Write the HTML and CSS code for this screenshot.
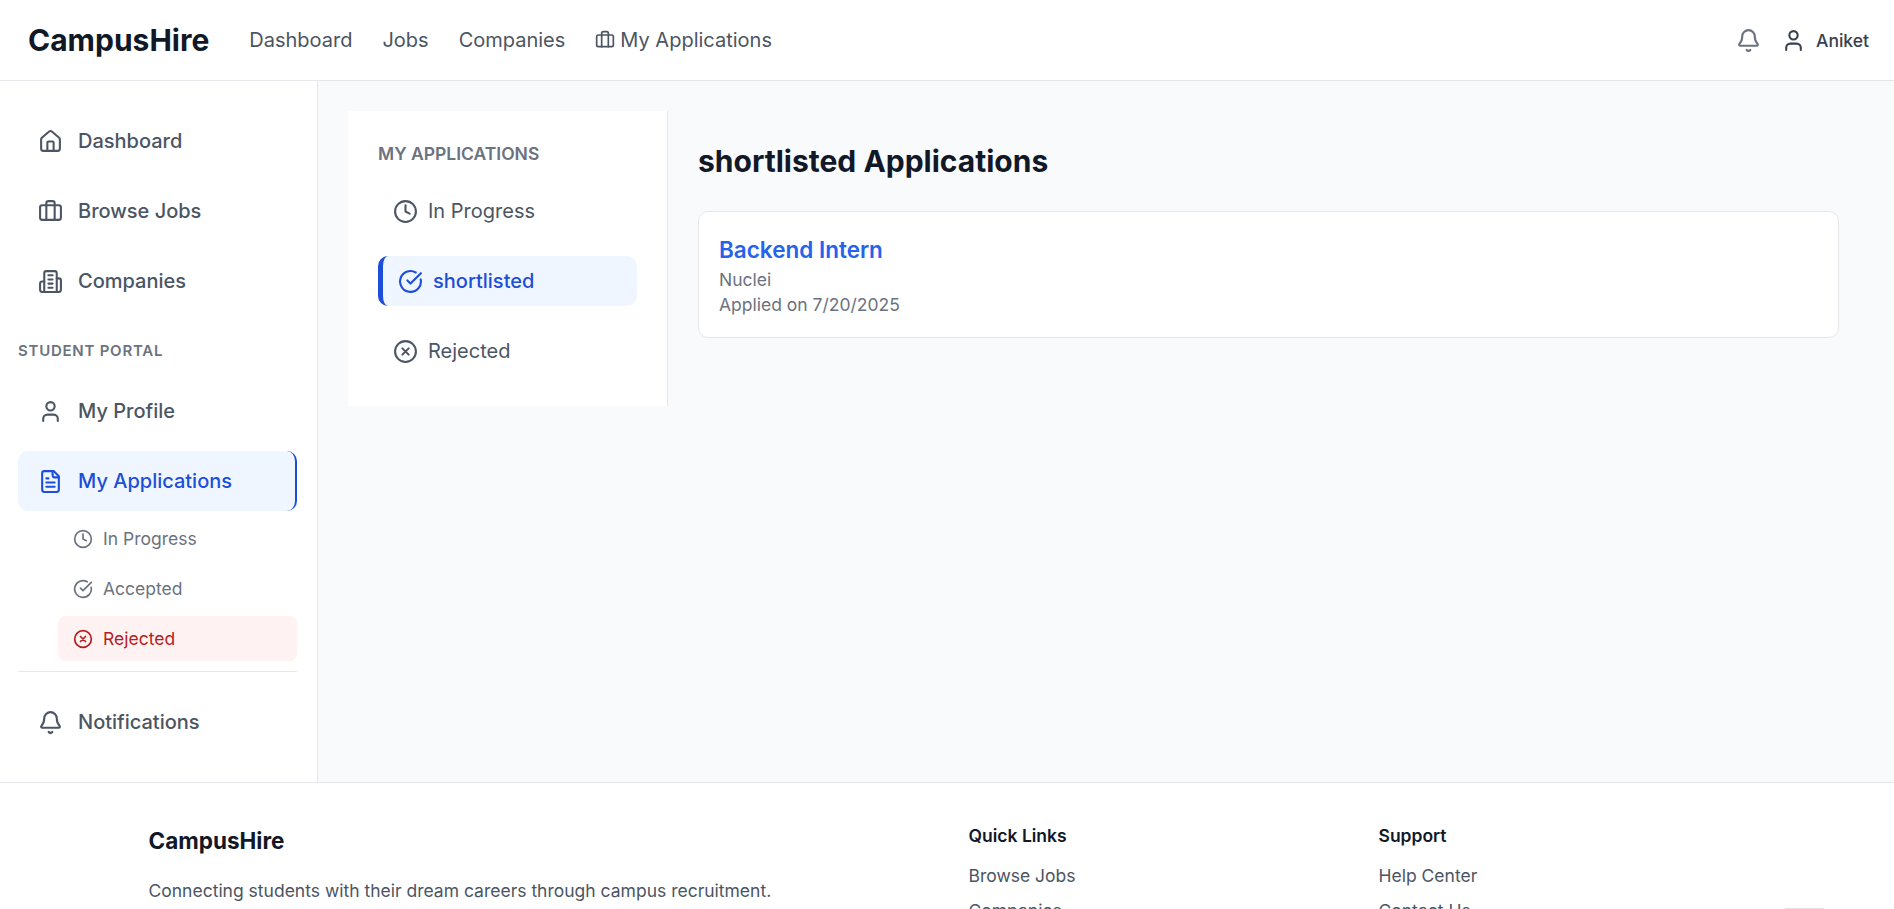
FILE: index.html
```html
<!DOCTYPE html>
<html lang="en">
<head>
<meta charset="utf-8">
<title>CampusHire</title>
<link rel="stylesheet" href="styles.css">
</head>
<body>
<svg class="sprite" aria-hidden="true">
  <symbol id="briefcase" viewBox="0 0 24 24"><path d="M16 20V4a2 2 0 0 0-2-2h-4a2 2 0 0 0-2 2v16"/><rect width="20" height="14" x="2" y="6" rx="2"/></symbol>
  <symbol id="bell" viewBox="0 0 24 24"><path d="M10.268 21a2 2 0 0 0 3.464 0"/><path d="M3.262 15.326A1 1 0 0 0 4 17h16a1 1 0 0 0 .74-1.673C19.41 13.956 18 12.499 18 8A6 6 0 0 0 6 8c0 4.499-1.411 5.956-2.738 7.326"/></symbol>
  <symbol id="user" viewBox="0 0 24 24"><path d="M19 21v-2a4 4 0 0 0-4-4H9a4 4 0 0 0-4 4v2"/><circle cx="12" cy="7" r="4"/></symbol>
  <symbol id="home" viewBox="0 0 24 24"><path d="M15 21v-8a1 1 0 0 0-1-1h-4a1 1 0 0 0-1 1v8"/><path d="M3 10a2 2 0 0 1 .709-1.528l7-5.999a2 2 0 0 1 2.582 0l7 5.999A2 2 0 0 1 21 10v9a2 2 0 0 1-2 2H5a2 2 0 0 1-2-2z"/></symbol>
  <symbol id="building" viewBox="0 0 24 24"><path d="M6 22V4a2 2 0 0 1 2-2h8a2 2 0 0 1 2 2v18Z"/><path d="M6 12H4a2 2 0 0 0-2 2v6a2 2 0 0 0 2 2h2"/><path d="M18 9h2a2 2 0 0 1 2 2v9a2 2 0 0 1-2 2h-2"/><path d="M10 6h4M10 10h4M10 14h4M10 18h4"/></symbol>
  <symbol id="file" viewBox="0 0 24 24"><path d="M15 2H6a2 2 0 0 0-2 2v16a2 2 0 0 0 2 2h12a2 2 0 0 0 2-2V7Z"/><path d="M14 2v4a2 2 0 0 0 2 2h4"/><path d="M10 9H8M16 13H8M16 17H8"/></symbol>
  <symbol id="clock" viewBox="0 0 24 24"><circle cx="12" cy="12" r="10"/><path d="M12 6v6l4 2"/></symbol>
  <symbol id="check" viewBox="0 0 24 24"><path d="M21.801 10A10 10 0 1 1 17 3.335"/><path d="m9 11 3 3L22 4"/></symbol>
  <symbol id="cross" viewBox="0 0 24 24"><circle cx="12" cy="12" r="10"/><path d="m15 9-6 6M9 9l6 6"/></symbol>
</svg>

<header class="topbar">
  <div class="logo">CampusHire</div>
  <nav class="topnav">
    <a>Dashboard</a>
    <a>Jobs</a>
    <a>Companies</a>
    <a class="with-icon"><svg class="icon icon-sm"><use href="#briefcase"/></svg>My Applications</a>
  </nav>
  <div class="account">
    <svg class="icon bell"><use href="#bell"/></svg>
    <a class="user"><svg class="icon"><use href="#user"/></svg>Aniket</a>
  </div>
</header>

<div class="shell">
  <aside class="sidebar">
    <a class="side-item"><svg class="icon"><use href="#home"/></svg>Dashboard</a>
    <a class="side-item"><svg class="icon"><use href="#briefcase"/></svg>Browse Jobs</a>
    <a class="side-item"><svg class="icon"><use href="#building"/></svg>Companies</a>
    <h3 class="side-title">STUDENT PORTAL</h3>
    <a class="side-item"><svg class="icon"><use href="#user"/></svg>My Profile</a>
    <a class="side-item active"><svg class="icon"><use href="#file"/></svg>My Applications</a>
    <div class="submenu">
      <a class="sub-item"><svg class="icon icon-sm"><use href="#clock"/></svg>In Progress</a>
      <a class="sub-item"><svg class="icon icon-sm"><use href="#check"/></svg>Accepted</a>
      <a class="sub-item rejected"><svg class="icon icon-sm"><use href="#cross"/></svg>Rejected</a>
    </div>
    <div class="side-bottom">
      <a class="side-item"><svg class="icon"><use href="#bell"/></svg>Notifications</a>
    </div>
  </aside>

  <main class="main">
    <section class="filters">
      <h2 class="filters-title">MY APPLICATIONS</h2>
      <a class="filter"><svg class="icon"><use href="#clock"/></svg>In Progress</a>
      <a class="filter selected"><svg class="icon"><use href="#check"/></svg>shortlisted</a>
      <a class="filter"><svg class="icon"><use href="#cross"/></svg>Rejected</a>
    </section>
    <section class="results">
      <h1 class="results-title">shortlisted Applications</h1>
      <article class="card">
        <h2 class="card-title">Backend Intern</h2>
        <p class="card-text">Nuclei</p>
        <p class="card-text">Applied on 7/20/2025</p>
      </article>
    </section>
  </main>
</div>

<footer class="footer">
  <div class="footer-grid">
    <div class="footer-brand">
      <h3 class="footer-logo">CampusHire</h3>
      <p class="footer-text">Connecting students with their dream careers through campus recruitment.</p>
    </div>
    <div class="footer-links">
      <h4 class="footer-title">Quick Links</h4>
      <a>Browse Jobs</a>
      <a>Companies</a>
    </div>
    <div class="footer-links">
      <h4 class="footer-title">Support</h4>
      <a>Help Center</a>
      <a>Contact Us</a>
    </div>
  </div>
</footer>
<div class="floating-tab"></div>
</body>
</html>
```
FILE: styles.css
```css
* { box-sizing: border-box; margin: 0; padding: 0; }

body {
  height: 909px;
  overflow: hidden;
  position: relative;
  font-family: Inter, "Liberation Sans", sans-serif;
  font-size: 20px;
  line-height: 30px;
  color: #4b5563;
  background: #fff;
}

.sprite { display: none; }

.icon {
  width: 25px;
  height: 25px;
  flex: none;
  fill: none;
  stroke: currentColor;
  stroke-width: 2;
  stroke-linecap: round;
  stroke-linejoin: round;
}
.icon-sm { width: 20px; height: 20px; }

/* Top bar */
.topbar {
  display: flex;
  align-items: center;
  height: 81px;
  padding: 0 25px 0 28px;
  border-bottom: 1px solid #e5e7eb;
}
.logo { font-size: 30px; font-weight: 700; line-height: 40px; color: #111827; }
.topnav { display: flex; gap: 30px; margin-left: 40px; }
.with-icon { display: flex; align-items: center; gap: 5px; }
.account { display: flex; align-items: center; gap: 20px; margin-left: auto; }
.bell { color: #6b7280; }
.user {
  display: flex;
  align-items: center;
  gap: 10px;
  font-size: 17.5px;
  font-weight: 500;
  line-height: 25px;
  color: #374151;
}

/* Shell */
.shell { display: flex; height: 701px; background: #f9fafc; }

.sidebar {
  width: 318px;
  flex: none;
  padding: 30px 20px 30px 18px;
  background: #fff;
  border-right: 1px solid #e5e7eb;
}
.side-item {
  display: flex;
  align-items: center;
  gap: 15px;
  width: 279px;
  height: 60px;
  margin-bottom: 10px;
  padding: 0 20px;
  border-radius: 10px;
  font-weight: 500;
}
.side-item.active {
  margin-bottom: 5px;
  color: #1d4ed8;
  background: #eff6ff;
  border-right: 2px solid #1d4ed8;
}
.side-title {
  padding: 20px 0;
  font-size: 15px;
  font-weight: 600;
  line-height: 20px;
  letter-spacing: 0.75px;
  color: #6b7280;
}
.submenu { display: flex; flex-direction: column; gap: 5px; width: 279px; padding-left: 40px; }
.sub-item {
  display: flex;
  align-items: center;
  gap: 10px;
  height: 45px;
  padding: 0 15px;
  border-radius: 7.5px;
  font-size: 17.5px;
  line-height: 25px;
  color: #6b7280;
}
.sub-item.rejected { color: #b91c1c; background: #fef2f2; }
.side-bottom { width: 279px; margin-top: 10px; padding-top: 20px; border-top: 1px solid #e5e7eb; }

/* Main area */
.main { display: flex; align-items: flex-start; flex: 1; padding: 30px 25px 30px 30px; }

.filters {
  display: flex;
  flex-direction: column;
  gap: 20px;
  width: 320px;
  flex: none;
  padding: 30px;
  background: #fff;
  border-right: 1px solid #e5e7eb;
}
.filters-title { font-size: 17.5px; font-weight: 600; line-height: 25px; color: #6b7280; }
.filter {
  display: flex;
  align-items: center;
  gap: 10px;
  height: 50px;
  padding: 0 15px;
  border-radius: 10px;
}
.filter.selected {
  font-weight: 500;
  color: #1d4ed8;
  background: #eff6ff;
  border-left: 5px solid #1d4ed8;
}

.results { flex: 1; padding: 30px; }
.results-title { margin-bottom: 30px; font-size: 30px; font-weight: 700; line-height: 40px; color: #111827; }
.card { padding: 20px; background: #fff; border: 1px solid #e5e7eb; border-radius: 10px; }
.card-title { font-size: 22.5px; font-weight: 600; line-height: 35px; color: #2563eb; }
.card-text { font-size: 17.5px; line-height: 25px; color: #6b7280; }

/* Footer */
.footer { height: 127px; padding: 40px 0 0 3px; overflow: hidden; background: #fff; border-top: 1px solid #e5e7eb; }
.footer-grid {
  display: grid;
  grid-template-columns: repeat(4, 1fr);
  gap: 40px;
  width: 1600px;
  margin: 0 auto;
  font-size: 17.5px;
  line-height: 25px;
}
.footer-brand { grid-column: span 2; }
.footer-logo { margin-bottom: 20px; font-size: 22.5px; font-weight: 700; line-height: 35px; color: #111827; }
.footer-links { display: flex; flex-direction: column; gap: 10px; }
.footer-title { margin-bottom: 5px; font-size: 17.5px; font-weight: 600; color: #111827; }

.floating-tab {
  position: absolute;
  right: 70px;
  bottom: 0;
  width: 39px;
  height: 1px;
  background: #e2e2e2;
}
```
